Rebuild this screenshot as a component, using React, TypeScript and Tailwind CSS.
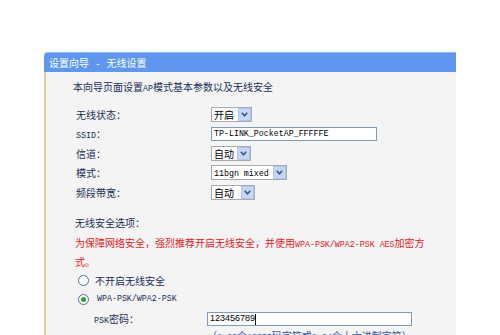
import React from 'react';

const cjk = "font-['Noto_Sans_CJK_SC','Noto_Sans_CJK_SC',sans-serif]";
const mono = "font-['Liberation_Mono',monospace] text-[8.3px]";

const Chevron = () => (
  <svg width="7" height="5" viewBox="0 0 7 5">
    <path d="M0.8 0.8 L3.5 3.8 L6.2 0.8" fill="none" stroke="#3d5688" strokeWidth="1.6" />
  </svg>
);

const Select: React.FC<{ width: string; children: React.ReactNode }> = ({ width, children }) => (
  <div className={`flex items-center h-[15px] border border-[#a5acb2] bg-white ${width}`}>
    <div className="flex-1 pl-[2px] leading-[13px] whitespace-nowrap overflow-hidden text-black">{children}</div>
    <div className="w-[13px] h-[13px] flex items-center justify-center bg-[#c6d6f6] border border-[#b0c4ec]">
      <Chevron />
    </div>
  </div>
);

const Row: React.FC<{ label: React.ReactNode; h: string; children: React.ReactNode }> = ({ label, h, children }) => (
  <div className={`flex items-center ${h}`}>
    <div className="w-[138px] pl-[3px] text-[#1c2d58]">{label}</div>
    {children}
  </div>
);

const Radio: React.FC<{ checked?: boolean }> = ({ checked }) => (
  <div className="w-[11px] h-[11px] rounded-full border border-[#4d6e96] bg-white flex items-center justify-center">
    {checked && <div className="w-[5px] h-[5px] rounded-full bg-[#2ea12e]" />}
  </div>
);

export default function App() {
  return (
    <div className={`w-[500px] h-[335px] bg-white overflow-hidden pt-[52px] pl-[44px] text-[10px] ${cjk}`}>
      <div className="w-[412px] h-[283px] flex flex-col">
        <div className="h-[20px] bg-[#5f96f0] rounded-tl-[4px] border-t border-[#8fb6f6] text-white pl-[5px] leading-[19px] whitespace-nowrap">
          设置向导<span className="mx-[7px]">-</span>无线设置
        </div>
        <div className="flex-1 bg-[#f4f4f4] border-l-2 border-[#e2d09c] pl-[27px] pt-[8px]">
          <div className="h-[14px] leading-[14px] text-[#1c2d55]">
            本向导页面设置<span className={mono}>AP</span>模式基本参数以及无线安全
          </div>
          <div className="mt-[10px]">
            <Row label="无线状态：" h="h-[20px]">
              <Select width="w-[41px]">开启</Select>
            </Row>
            <Row label={<><span className={mono}>SSID</span>：</>} h="h-[20px]">
              <div className={`h-[14px] w-[166px] border border-[#7f9db9] bg-white pl-[2px] leading-[12px] text-black ${mono}`}>
                TP-LINK_PocketAP_FFFFFE
              </div>
            </Row>
            <Row label="信道：" h="h-[19px]">
              <Select width="w-[40px]">自动</Select>
            </Row>
            <Row label="模式：" h="h-[19px]">
              <Select width="w-[76px]">
                <span className={mono}>11bgn mixed</span>
              </Select>
            </Row>
            <Row label="频段带宽：" h="h-[20px]">
              <Select width="w-[44px]">自动</Select>
            </Row>
          </div>
          <div className="mt-[14px] h-[14px] leading-[14px] pl-[2px] text-[#1c2d58]">无线安全选项：</div>
          <div className="mt-[4px] pl-[2px] leading-[17px] text-[#e3201c]">
            为保障网络安全，强烈推荐开启无线安全，并使用<span className={mono}>WPA-PSK/WPA2-PSK AES</span>加密方
            <br />
            式。
          </div>
          <div className="h-[20px] flex items-center pl-[5px] gap-[6px] text-[#1c2d58]">
            <Radio />
            <span>不开启无线安全</span>
          </div>
          <div className="h-[19px] flex items-center pl-[5px] gap-[8px] text-[#1c2d58]">
            <Radio checked />
            <span className={mono}>WPA-PSK/WPA2-PSK</span>
          </div>
          <div className="h-[20px] flex items-center">
            <div className="w-[134px] pl-[21px] text-[#1c2d58]">
              <span className={mono}>PSK</span>密码：
            </div>
            <div className="h-[14px] w-[205px] border border-[#7f9db9] bg-white pl-[2px] flex items-center text-black font-['Liberation_Sans',sans-serif] text-[9px]">
              123456789
              <span className="w-px h-[11px] bg-black" />
            </div>
          </div>
          <div className="h-[14px] leading-[14px] pl-[134px] text-[#3553a8] whitespace-nowrap">
            （<span className={mono}>8-63</span>个<span className={mono}>ASCII</span>码字符或<span className={mono}>8-64</span>个十六进制字符）
          </div>
        </div>
      </div>
    </div>
  );
}
